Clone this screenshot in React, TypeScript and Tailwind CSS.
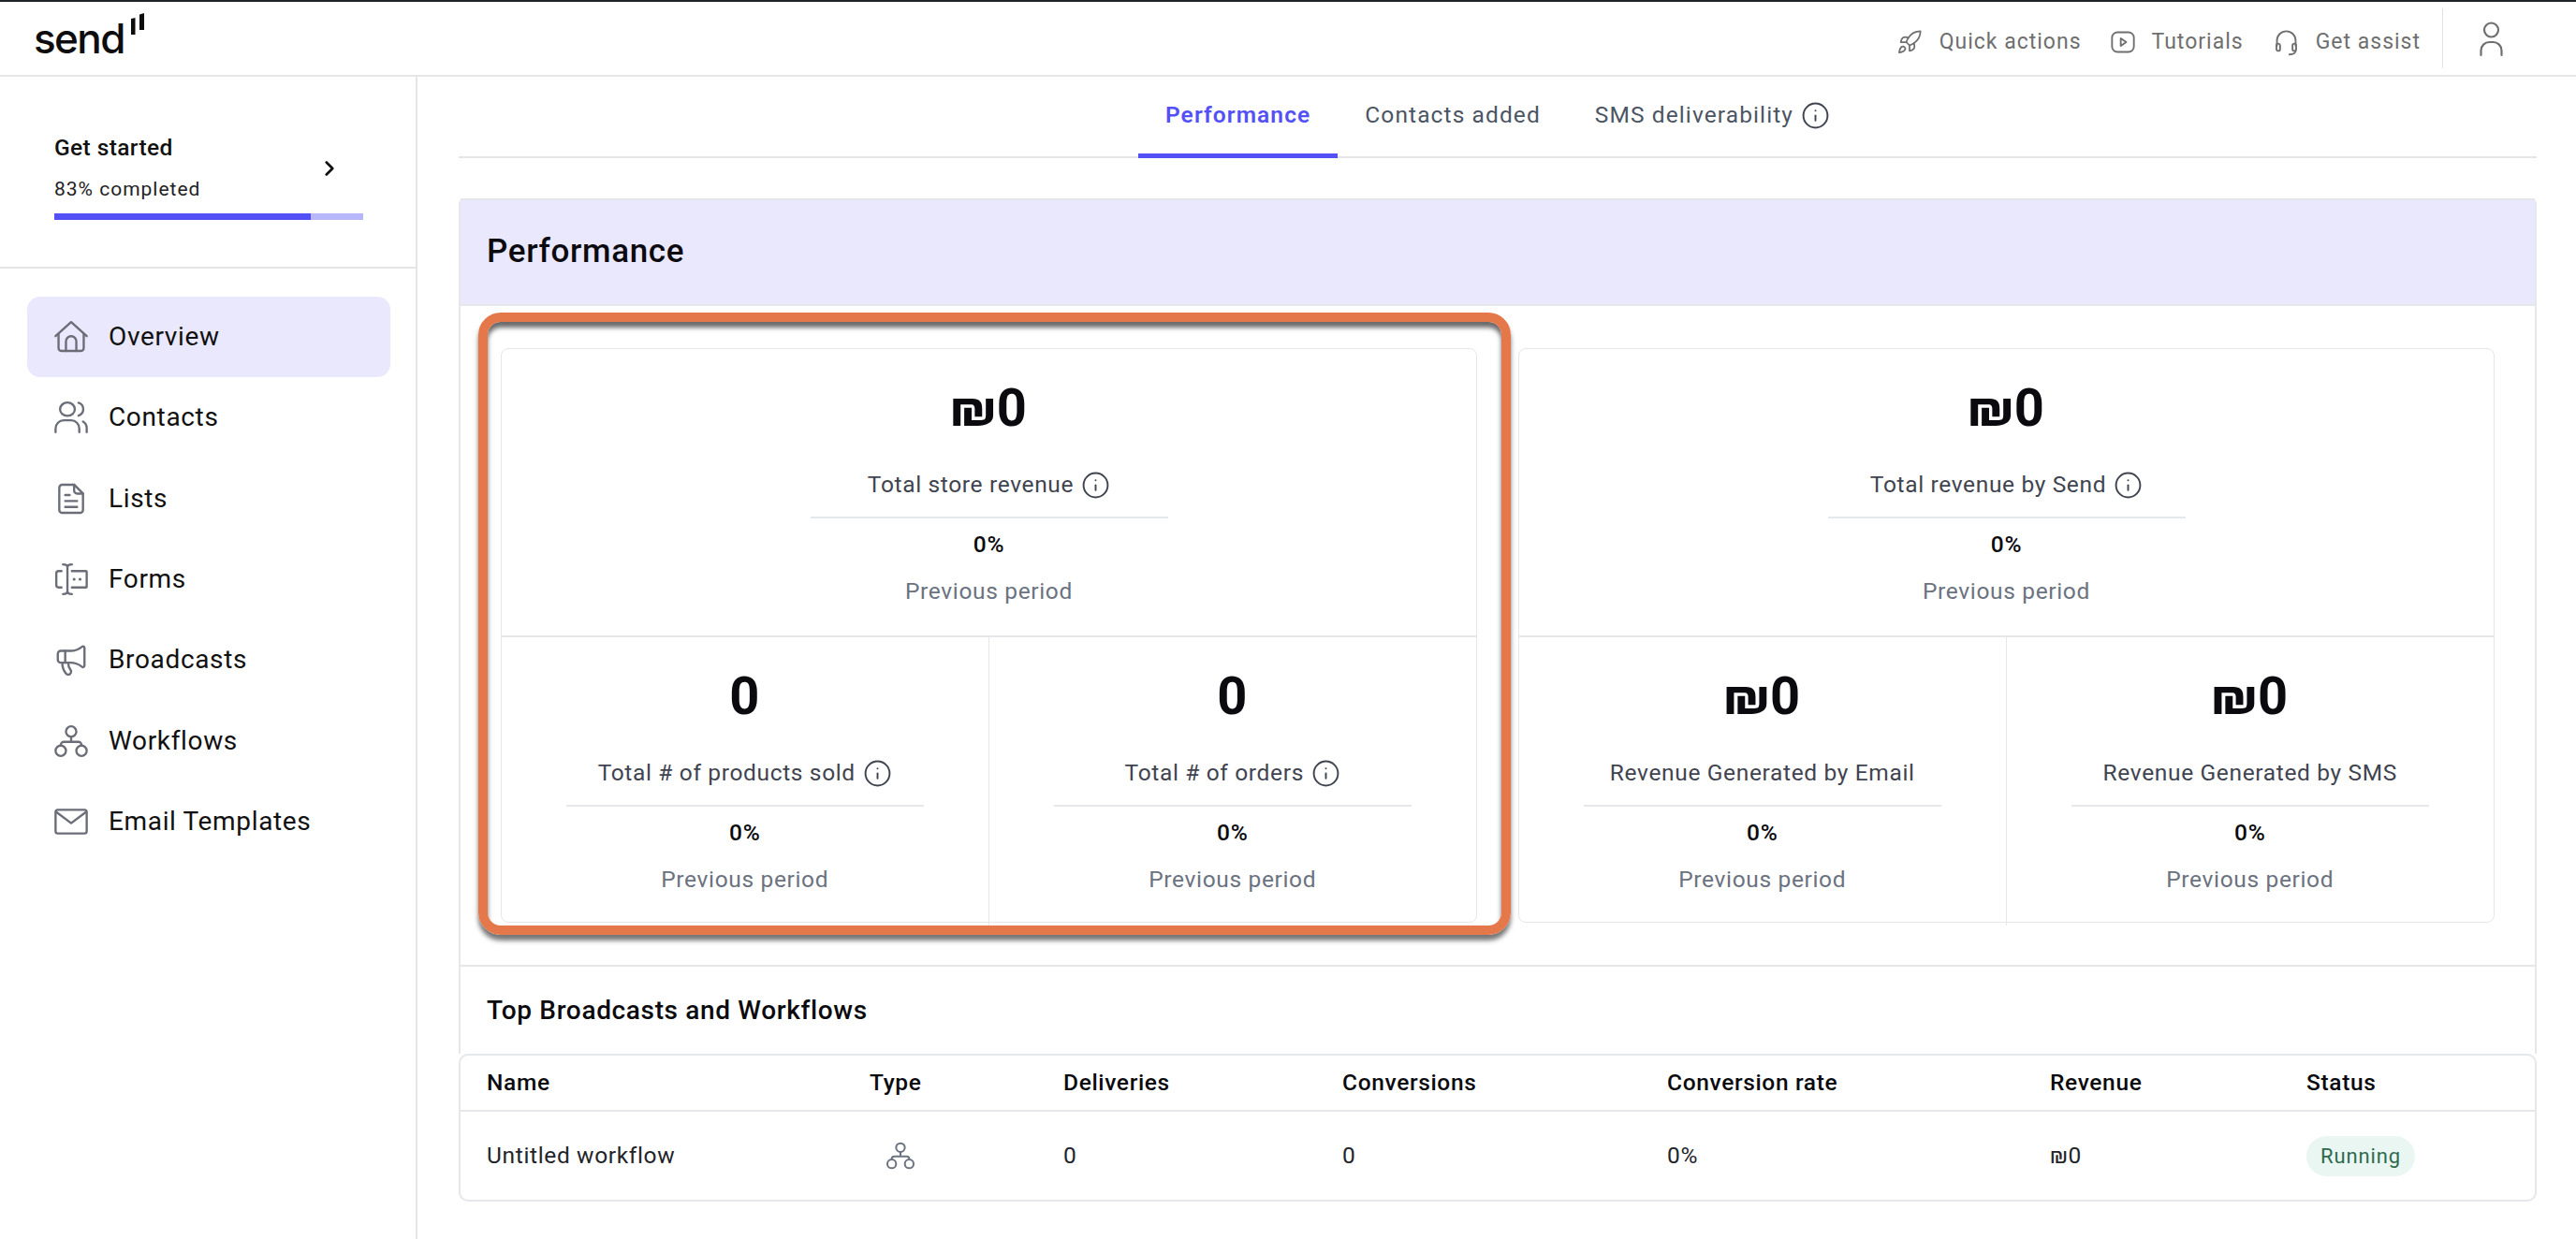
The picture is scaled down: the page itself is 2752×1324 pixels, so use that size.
import React from 'react';
import { Info, ChevronRight, Megaphone, Rocket } from 'lucide-react';

const navIcon = {
  width: 38,
  height: 38,
  viewBox: '0 0 24 24',
  fill: 'none',
  stroke: 'currentColor',
  strokeWidth: 1.5,
  strokeLinecap: 'round' as const,
  strokeLinejoin: 'round' as const,
};

const HomeIcon = () => (
  <svg {...navIcon}>
    <path d="M1.500 11.500 12 2l10.500 9.500" />
    <path d="M3.500 10v9.500a2 2 0 0 0 2 2h13a2 2 0 0 0 2-2V10" />
    <path d="M8.500 21.500V15a3.500 3.500 0 0 1 7 0v6.500" />
  </svg>
);

const ContactsIcon = () => (
  <svg {...navIcon}>
    <ellipse cx="9.500" cy="6.500" rx="5" ry="4.500" />
    <path d="M17 2.200a4.500 4.500 0 0 1 0 8.600" />
    <path d="M1.500 22v-2.500a5.500 5.500 0 0 1 5.500-5.500h5a5.500 5.500 0 0 1 5.500 5.500V22" />
    <path d="M20 14.800a5 5 0 0 1 2.500 4.200v3" />
  </svg>
);

const ListsIcon = () => (
  <svg {...navIcon}>
    <path d="M6 2.500h8l6 6v11a2 2 0 0 1-2 2H6a2 2 0 0 1-2-2v-15a2 2 0 0 1 2-2Z" />
    <path d="M14 2.500v4a2 2 0 0 0 2 2h4" />
    <path d="M8 9.500h3M8 13.500h8M8 17.500h8" />
  </svg>
);

const FormsIcon = () => (
  <svg {...navIcon}>
    <path d="M5.500 6.500H3.500A1.500 1.500 0 0 0 2 8v8a1.500 1.500 0 0 0 1.500 1.500h2" />
    <path d="M6.500 2c2 0 3 .6 3 2v16c0 1.400-1 2-3 2M12.500 2c-2 0-3 .6-3 2M12.500 22c-2 0-3-.6-3-2" />
    <path d="M12.500 6.500H22a.5.5 0 0 1 .5.5v10a.5.5 0 0 1-.5.5h-9.500" />
    <path d="M14 12h.01M18 12h.01" strokeWidth={2} />
  </svg>
);

const WorkflowIcon = ({ size = 38 }: { size?: number }) => (
  <svg {...navIcon} width={size} height={size}>
    <circle cx="12" cy="5.500" r="3.500" />
    <circle cx="5" cy="18.500" r="3.500" />
    <circle cx="19" cy="18.500" r="3.500" />
    <path d="M12 9v3.500M5 15v-.5a2 2 0 0 1 2-2h10a2 2 0 0 1 2 2v.5" />
  </svg>
);

const MailIcon = () => (
  <svg {...navIcon}>
    <rect x="1.500" y="4" width="21" height="16" rx="1.500" />
    <path d="m2 5.500 10 7.500 10-7.500" />
  </svg>
);

const TutorialIcon = () => (
  <svg width="28" height="28" viewBox="0 0 24 24" fill="none" stroke="currentColor" strokeWidth="1.600" strokeLinejoin="round">
    <rect x="2" y="3" width="20" height="18" rx="5" />
    <path d="M10 8.500v7l5-3.500Z" />
  </svg>
);

const HeadsetIcon = () => (
  <svg width="27" height="31" viewBox="0 0 24 28" fill="none" stroke="currentColor" strokeWidth="1.700" strokeLinecap="round">
    <path d="M3 17v-5a9 9 0 0 1 18 0v5" />
    <rect x="2.500" y="15" width="3.500" height="7" rx="1.750" />
    <rect x="18" y="15" width="3.500" height="7" rx="1.750" />
    <path d="M21 22c0 2.500-2.500 3.500-6 3.500" />
  </svg>
);

const UserIcon = () => (
  <svg width="27" height="38" viewBox="0 0 27 38" fill="none" stroke="currentColor" strokeWidth="2.200" strokeLinecap="round">
    <circle cx="13.500" cy="9" r="7.500" />
    <path d="M2.500 36v-5a9 9 0 0 1 9-9h4a9 9 0 0 1 9 9v5" />
  </svg>
);

const InfoDot = () => <Info size={31} strokeWidth={1.500} className="shrink-0 text-[#3f4450]" />;

const nav = [
  { label: 'Overview', icon: <HomeIcon />, active: true },
  { label: 'Contacts', icon: <ContactsIcon /> },
  { label: 'Lists', icon: <ListsIcon /> },
  { label: 'Forms', icon: <FormsIcon /> },
  { label: 'Broadcasts', icon: <Megaphone size={38} strokeWidth={1.500} /> },
  { label: 'Workflows', icon: <WorkflowIcon /> },
  { label: 'Email Templates', icon: <MailIcon /> },
];

const StatCell = ({ value, label, info, className = '' }: { value: string; label: string; info?: boolean; className?: string }) => (
  <div className={`flex h-[308px] flex-col items-center pt-[30px] ${className}`}>
    <div className="text-[56px] leading-[66px] font-bold text-[#0b0b0f]">{value}</div>
    <div className="mt-[31px] flex h-[36px] items-center gap-[8px] text-[24.500px] text-[#3f4450]">
      {label}
      {info && <InfoDot />}
    </div>
    <div className="mt-[16px] h-[2px] w-[382px] bg-[#e5e7eb]" />
    <div className="mt-[10px] h-[36px] text-[24.500px] leading-[36px] font-medium text-[#0b0b0f]">0%</div>
    <div className="mt-[14px] h-[36px] text-[24.500px] leading-[36px] text-[#6b7280]">Previous period</div>
  </div>
);

const StatCard = ({ items }: { items: { value: string; label: string; info?: boolean }[] }) => (
  <div className="grid w-[1043px] grid-cols-2 rounded-lg border border-[#e5e7eb]">
    <StatCell {...items[0]} className="col-span-2 border-b-2 border-[#e5e7eb]" />
    <StatCell {...items[1]} className="border-r border-[#e5e7eb]" />
    <StatCell {...items[2]} />
  </div>
);

export default function App() {
  return (
    <div className="flex h-[1324px] w-[2752px] flex-col overflow-hidden border-t-2 border-[#1f2428] bg-white font-['Roboto',sans-serif] tracking-[0.650px] text-[#0b0b0f]">
      {/* Top bar */}
      <header className="flex h-[80px] shrink-0 items-center justify-between border-b-2 border-[#e5e5e5]">
        <div className="flex items-start pl-[36px]">
          <span className="mt-[-1px] font-['Inter',sans-serif] text-[44px] leading-[54px] font-medium tracking-[-1.600px] text-[#0d0d0d]">send</span>
          <svg width="16" height="26" viewBox="0 0 16 26" className="mt-[-1px] ml-[6px]" fill="#0d0d0d">
            <path d="M1 6l4.500-1v18H1Z" />
            <path d="M10 1.500l5-1.500v18h-5Z" />
          </svg>
        </div>
        <div className="mt-[8px] flex h-[64px] items-center text-[23px] tracking-[1px] text-[#6f6f6f]">
          <Rocket size={28} strokeWidth={1.500} />
          <span className="ml-[18px]">Quick actions</span>
          <span className="ml-[30px]"><TutorialIcon /></span>
          <span className="ml-[17px]">Tutorials</span>
          <span className="ml-[32px]"><HeadsetIcon /></span>
          <span className="ml-[18px]">Get assist</span>
          <div className="mt-[-8px] mr-[38px] ml-[23px] h-[64px] w-px bg-[#e0e0e0]" />
          <span className="mt-[-6px] mr-[77px]"><UserIcon /></span>
        </div>
      </header>

      <div className="flex min-h-0 flex-1">
        {/* Sidebar */}
        <aside className="w-[446px] shrink-0 border-r-2 border-[#e5e5e5]">
          <div className="relative h-[205px] border-b-2 border-[#e5e5e5] pt-[57px] pl-[58px]">
            <div className="text-[24.500px] leading-[38px] font-medium tracking-[0.400px] text-[#111]">Get started</div>
            <div className="mt-[10px] text-[21px] leading-[30px] tracking-[1px] text-[#222]">83% completed</div>
            <div className="mt-[11px] flex h-[7px] w-[330px] bg-[#b9b7fb]">
              <div className="h-full w-[274px] bg-[#5350f5]" />
            </div>
            <ChevronRight size={26} strokeWidth={2.500} className="absolute top-[85px] left-[339px] text-[#111]" />
          </div>
          <nav className="flex flex-col pt-[30px] pl-[29px]">
            {nav.map((item) => (
              <div
                key={item.label}
                className={`flex h-[86.300px] w-[388px] items-center gap-[21px] rounded-[14px] pl-[28px] text-[28px] tracking-[0.650px] text-[#111] ${item.active ? 'bg-[#e9e8fd]' : ''}`}
              >
                <span className="flex w-[38px] justify-center text-[#6b6e78]">{item.icon}</span>
                {item.label}
              </div>
            ))}
          </nav>
        </aside>

        {/* Main */}
        <main className="min-w-0 flex-1 pr-[42px] pl-[44px]">
          <div className="flex h-[87px] justify-center border-b-2 border-[#e5e5e5] tracking-[1.100px]">
            <div className="h-[87px] border-b-[5px] border-[#5350f5] px-[29px] pt-[22px] text-[24.500px] leading-[38px] font-semibold text-[#5350f5]">Performance</div>
            <div className="px-[29px] pt-[22px] text-[24.500px] leading-[38px] text-[#4b5563]">Contacts added</div>
            <div className="flex items-start gap-[8px] px-[29px] pt-[22px] text-[24.500px] leading-[38px] text-[#4b5563]">
              SMS deliverability
              <span className="mt-[4px]"><InfoDot /></span>
            </div>
          </div>

          <section className="mt-[43px] rounded-t-md border-x-2 border-[#e5e7eb]">
            <div className="flex h-[115px] items-center border-y-2 border-[#e5e7eb] bg-[#e9e8fd] pl-[28px] text-[35px] font-medium text-[#0b0b0f]">Performance</div>
            <div className="relative flex h-[706px] justify-between border-b-2 border-[#e5e7eb] px-[43px] py-[45px]">
              <StatCard
                items={[
                  { value: '₪0', label: 'Total store revenue', info: true },
                  { value: '0', label: 'Total # of products sold', info: true },
                  { value: '0', label: 'Total # of orders', info: true },
                ]}
              />
              <StatCard
                items={[
                  { value: '₪0', label: 'Total revenue by Send', info: true },
                  { value: '₪0', label: 'Revenue Generated by Email' },
                  { value: '₪0', label: 'Revenue Generated by SMS' },
                ]}
              />
              {/* annotation drawn over the first card */}
              <div className="pointer-events-none absolute top-[7px] left-[19px] h-[665px] w-[1103px] rounded-[24px] border-[10px] border-[#e5784a] shadow-[0_6px_5px_#444444bb,inset_0_6px_5px_#444444cc]" />
            </div>
            <div className="flex h-[93px] items-center pl-[28px] text-[28px] font-medium text-[#0b0b0f]">Top Broadcasts and Workflows</div>
          </section>

          <div className="rounded-[10px] border-2 border-[#e5e7eb]">
            <div className="grid h-[60px] grid-cols-[409px_207px_298px_347px_409px_274px_1fr] items-center border-b-2 border-[#e5e7eb] pl-[28px] text-[24.500px] font-medium text-[#0b0b0f]">
              <div>Name</div>
              <div>Type</div>
              <div>Deliveries</div>
              <div>Conversions</div>
              <div>Conversion rate</div>
              <div>Revenue</div>
              <div>Status</div>
            </div>
            <div className="grid h-[94px] grid-cols-[409px_207px_298px_347px_409px_274px_1fr] items-center pl-[28px] text-[24.500px] text-[#22242a]">
              <div>Untitled workflow</div>
              <div className="pl-[17px] text-[#6b7280]"><WorkflowIcon size={32} /></div>
              <div>0</div>
              <div>0</div>
              <div>0%</div>
              <div>₪0</div>
              <div>
                <span className="inline-flex h-[43px] w-[116px] items-center justify-center rounded-[22px] bg-[#e9f6f1] text-[22px] tracking-[0.900px] text-[#2d6a4f]">Running</span>
              </div>
            </div>
          </div>
        </main>
      </div>
    </div>
  );
}
